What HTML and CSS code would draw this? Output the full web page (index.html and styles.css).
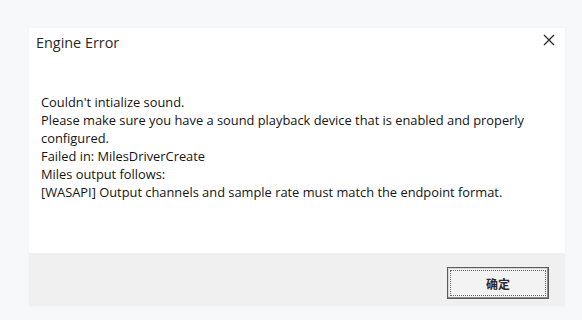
FILE: index.html
```html
<!DOCTYPE html>
<html>
<head>
<meta charset="utf-8">
<link rel="stylesheet" href="styles.css">
</head>
<body>
<div class="dialog">
  <div class="header">
    <span class="title">Engine Error</span>
    <span class="close">
      <svg width="12" height="12" viewBox="0 0 12 12"><path d="M1 1 L11 11 M11 1 L1 11" stroke="#2b2b2b" stroke-width="1.3" fill="none"/></svg>
    </span>
  </div>
  <div class="content">
    <p class="msg">Couldn't intialize sound.<br>Please make sure you have a sound playback device that is enabled and properly<br>configured.<br>Failed in: MilesDriverCreate<br>Miles output follows:<br>[WASAPI] Output channels and sample rate must match the endpoint format.</p>
  </div>
  <div class="footer">
    <button class="ok"><span class="focus">确定</span></button>
  </div>
</div>
</body>
</html>
```
FILE: styles.css
```css
html, body {
  margin: 0;
  padding: 0;
}
body {
  width: 582px;
  height: 320px;
  background: #f6f8fa;
  font-family: "Open Sans", "Noto Sans CJK SC", sans-serif;
  color: #1c1c1c;
  overflow: hidden;
}
.dialog {
  margin: 28px 0 0 29px;
  width: 536px;
  background: #ffffff;
  box-shadow: 0 0 3px rgba(0,0,0,0.04);
}
.header {
  height: 30px;
  display: flex;
  align-items: center;
  justify-content: space-between;
  padding: 0 8px 0 7px;
}
.title {
  font-size: 14.4px;
  color: #2a2a2a;
  line-height: 30px;
}
.close {
  display: flex;
  width: 16px;
  height: 16px;
  align-items: center;
  justify-content: center;
  margin-top: -6px;
}
.content {
  height: 160px;
  padding: 35px 0 0 12px;
}
.msg {
  margin: 0;
  font-size: 12.85px;
  line-height: 18px;
  color: #141414;
}
.footer {
  height: 53px;
  background: #f0f0f0;
  display: flex;
  justify-content: flex-end;
  align-items: flex-start;
  padding-right: 16px;
}
.ok {
  margin-top: 14px;
  width: 102px;
  height: 32px;
  padding: 2px;
  background: #f3f3f3;
  border: 1px solid #5a5a5a;
  box-shadow: inset -1px -1px 0 #8a8a8a, inset 1px 1px 0 #d8d8d8;
  font-family: "Noto Sans CJK SC", sans-serif;
  font-size: 12px;
  font-weight: bold;
  color: #2a2a2a;
  display: flex;
}
.focus {
  flex: 1;
  display: flex;
  align-items: center;
  justify-content: center;
  border: 1px dotted #666;
}
```
